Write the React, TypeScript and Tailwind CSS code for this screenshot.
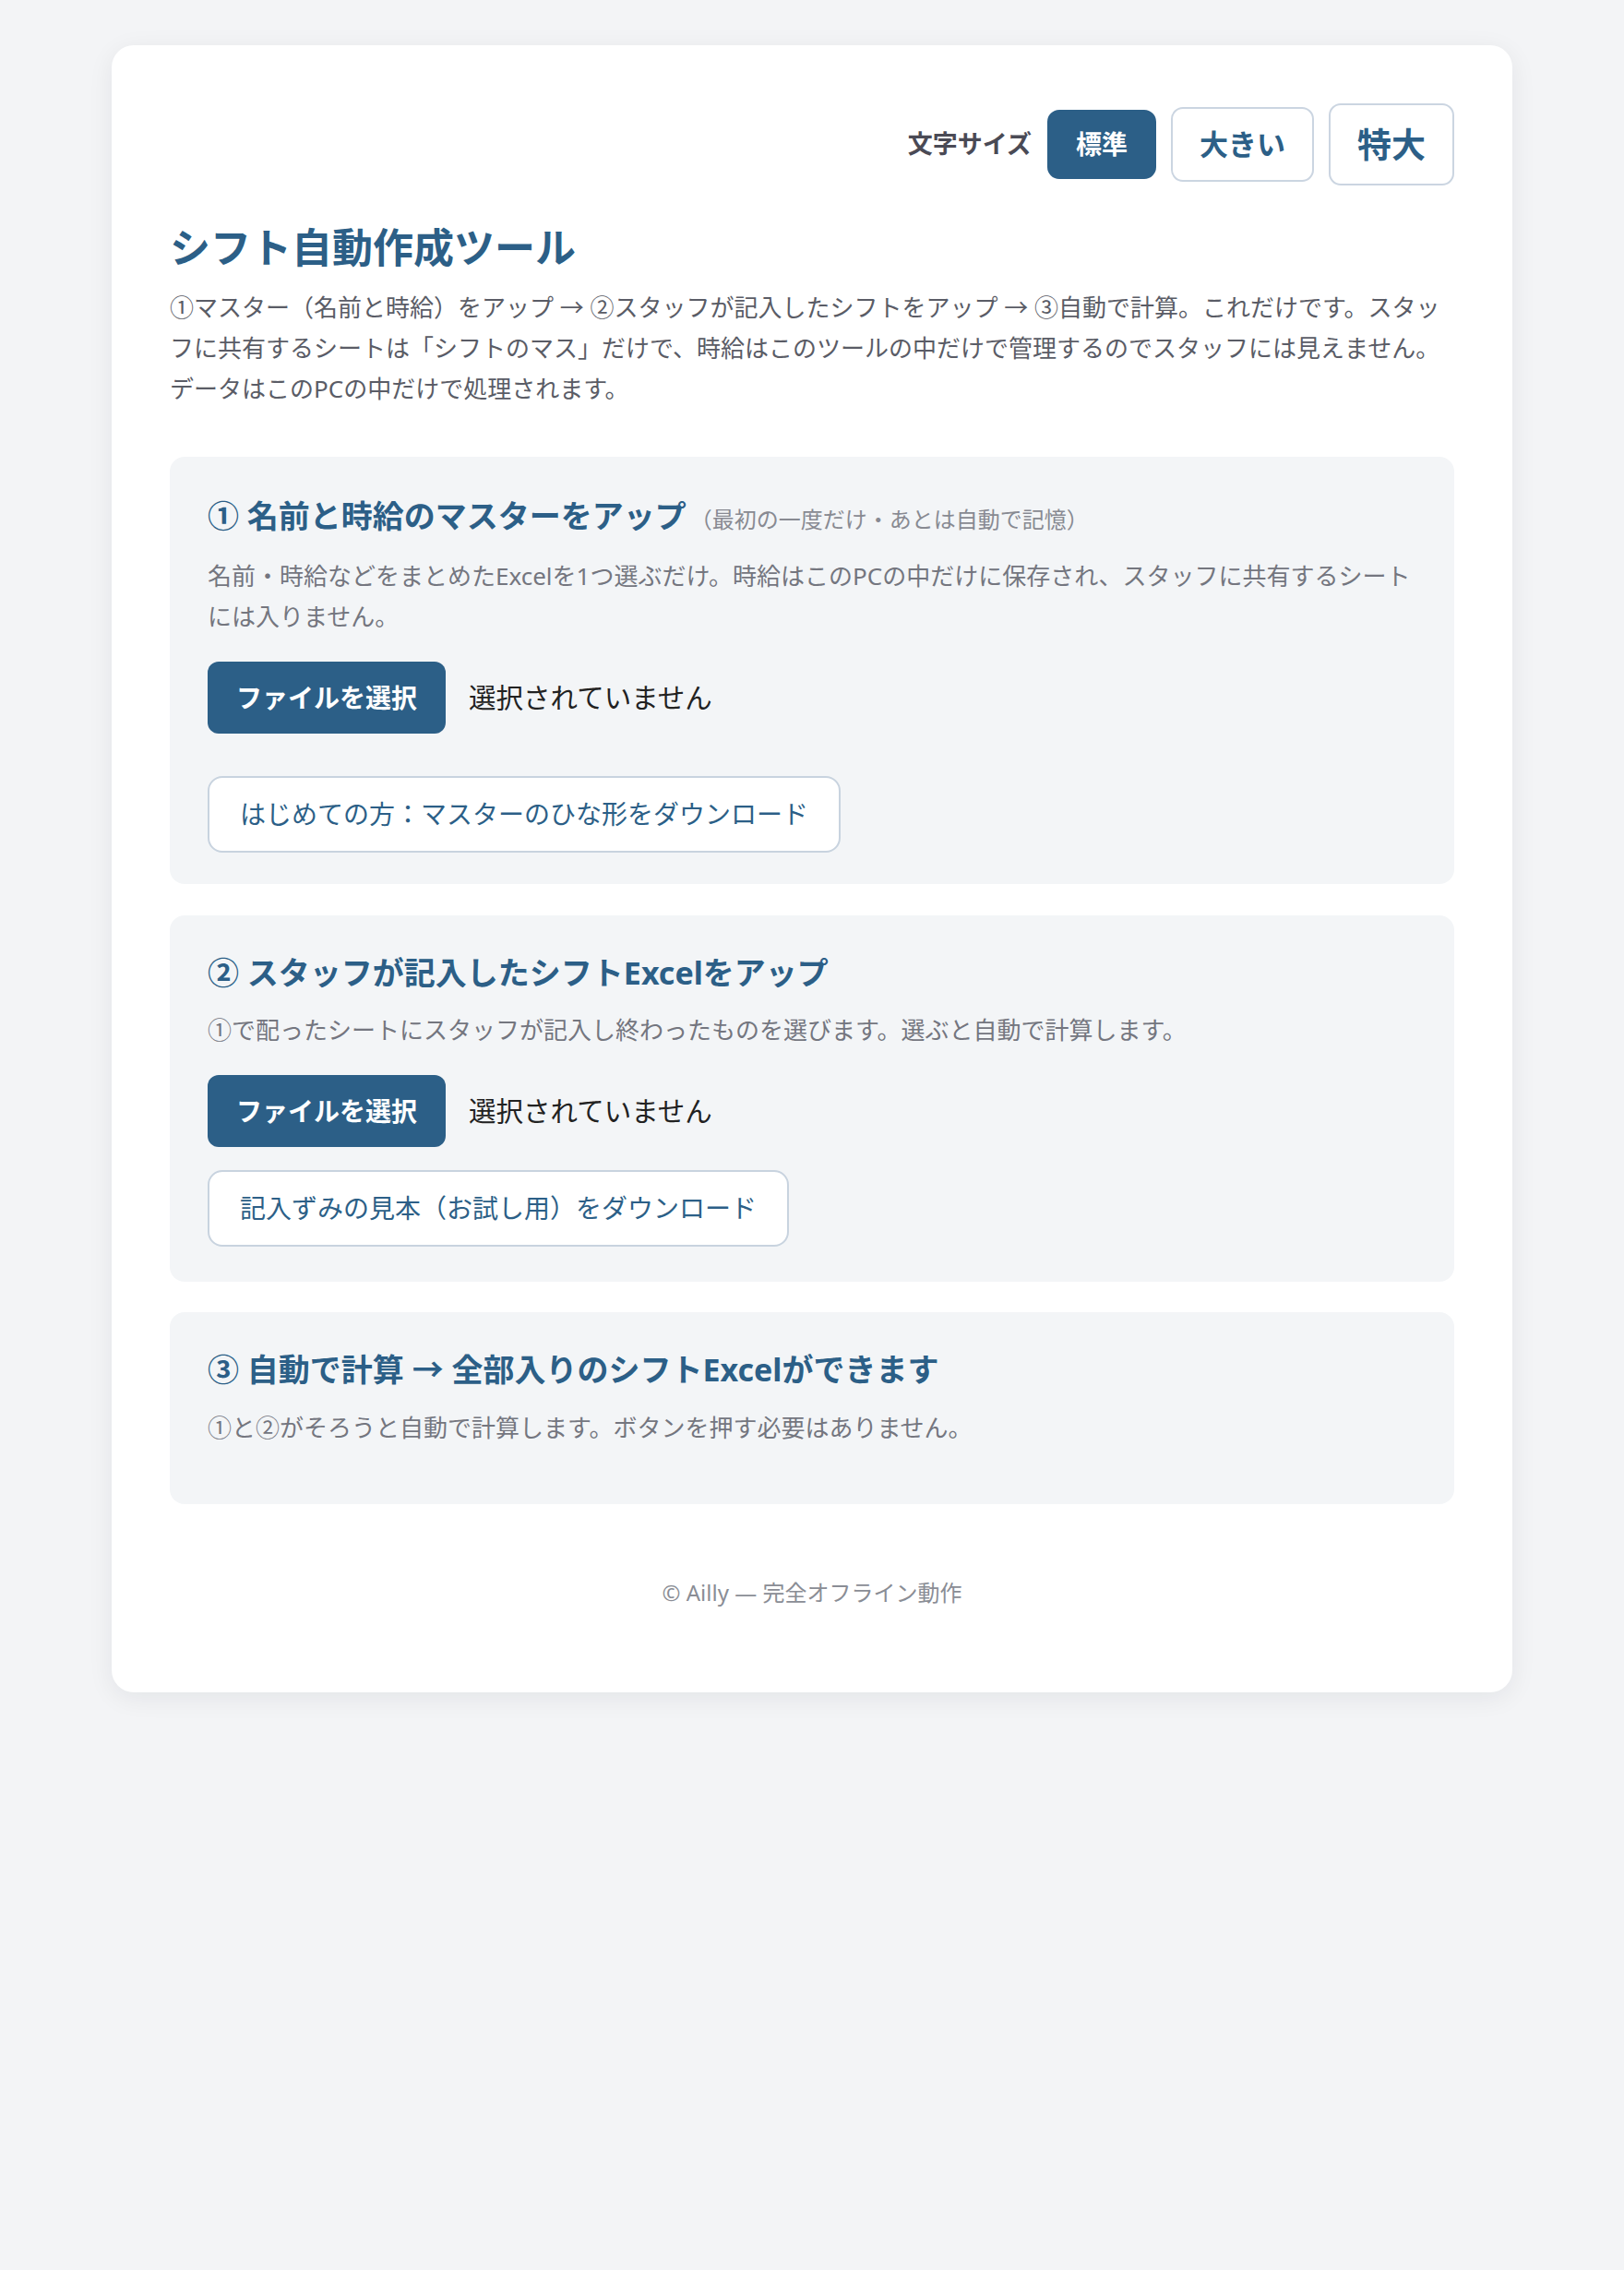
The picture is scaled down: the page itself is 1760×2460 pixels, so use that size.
import React from 'react';

const font = { fontFamily: '"Noto Sans", "Noto Sans CJK JP", sans-serif' };

interface FilePickProps {
	className?: string;
}

const FilePick = ({ className = '' }: FilePickProps) => {
	return (
		<div className={`flex items-center ${className}`}>
			<button className="rounded-[12px] bg-[#2c5f87] px-[31px] py-[18px] text-[28px] font-bold leading-[42px] text-white">
				ファイルを選択
			</button>
			<span className="ml-[25px] text-[29.5px] leading-[42px] text-[#222]">選択されていません</span>
		</div>
	);
};

const DownloadButton = ({ label, className = '' }: { label: string; className?: string }) => (
	<button
		className={`rounded-[16px] border-2 border-[#c8d3df] bg-white px-[33px] py-[18px] text-[28px] leading-[43px] text-[#2c5f87] ${className}`}
	>
		{label}
	</button>
);

const App = () => {
	return (
		<div className="min-h-screen bg-[#f3f4f6] pt-[49px] pb-10" style={font}>
			<div className="mx-auto w-[1518px] rounded-[24px] bg-white px-[63px] pt-[63px] pb-[90px] shadow-[0_6px_28px_rgba(15,23,42,0.07)]">
				{/* 文字サイズ切り替え */}
				<div className="flex items-center justify-end">
					<span className="mr-[17px] text-[27px] font-bold text-[#4a4a55]">文字サイズ</span>
					<button className="rounded-[13px] border-2 border-[#2c5f87] bg-[#2c5f87] px-[29px] py-[14px] text-[28px] font-bold leading-[43px] text-white">
						標準
					</button>
					<button className="ml-[16px] rounded-[13px] border-2 border-[#cbd5e1] bg-white px-[29px] py-[15px] text-[31px] font-bold leading-[47px] text-[#2c5f87]">
						大きい
					</button>
					<button className="ml-[16px] rounded-[13px] border-2 border-[#cbd5e1] bg-white px-[29px] py-[15px] text-[37px] font-bold leading-[55px] text-[#2c5f87]">
						特大
					</button>
				</div>

				<h1 className="mt-[39px] text-[44px] font-bold leading-[57px] text-[#2c5f87]">シフト自動作成ツール</h1>
				<p className="mt-[14px] text-[26px] leading-[44px] text-[#5a5c66]">
					①マスター（名前と時給）をアップ → ②スタッフが記入したシフトをアップ → ③自動で計算。これだけです。スタッフに共有するシートは「シフトのマス」だけで、時給はこのツールの中だけで管理するのでスタッフには見えません。データはこのPCの中だけで処理されます。
				</p>

				<section className="mt-[52px] rounded-[16px] bg-[#f3f5f7] px-[41px] pt-[40px] pb-[34px]">
					<h2 className="text-[34px] font-bold leading-[48px] text-[#2c5f87]">
						① 名前と時給のマスターをアップ
						<span className="ml-[4px] text-[24px] font-normal text-[#888a92]">（最初の一度だけ・あとは自動で記憶）</span>
					</h2>
					<p className="mt-[15px] text-[26px] leading-[44px] text-[#74767f]">
						名前・時給などをまとめたExcelを1つ選ぶだけ。時給はこのPCの中だけに保存され、スタッフに共有するシートには入りません。
					</p>
					<FilePick className="mt-[27px]" />
					<DownloadButton className="mt-[46px]" label="はじめての方：マスターのひな形をダウンロード" />
				</section>

				<section className="mt-[34px] rounded-[16px] bg-[#f3f5f7] px-[41px] pt-[38px] pb-[38px]">
					<h2 className="text-[34px] font-bold leading-[48px] text-[#2c5f87]">② スタッフが記入したシフトExcelをアップ</h2>
					<p className="mt-[16px] text-[26px] leading-[44px] text-[#74767f]">
						①で配ったシートにスタッフが記入し終わったものを選びます。選ぶと自動で計算します。
					</p>
					<FilePick className="mt-[27px]" />
					<DownloadButton className="mt-[25px]" label="記入ずみの見本（お試し用）をダウンロード" />
				</section>

				<section className="mt-[33px] rounded-[16px] bg-[#f3f5f7] px-[41px] pt-[38px] pb-[61px]">
					<h2 className="text-[34px] font-bold leading-[48px] text-[#2c5f87]">③ 自動で計算 → 全部入りのシフトExcelができます</h2>
					<p className="mt-[17px] text-[26px] leading-[44px] text-[#74767f]">
						①と②がそろうと自動で計算します。ボタンを押す必要はありません。
					</p>
				</section>

				<footer className="mt-[78px] text-center text-[24px] leading-[36px] text-[#8a8d95]">© Ailly — 完全オフライン動作</footer>
			</div>
		</div>
	);
};

export default App;
